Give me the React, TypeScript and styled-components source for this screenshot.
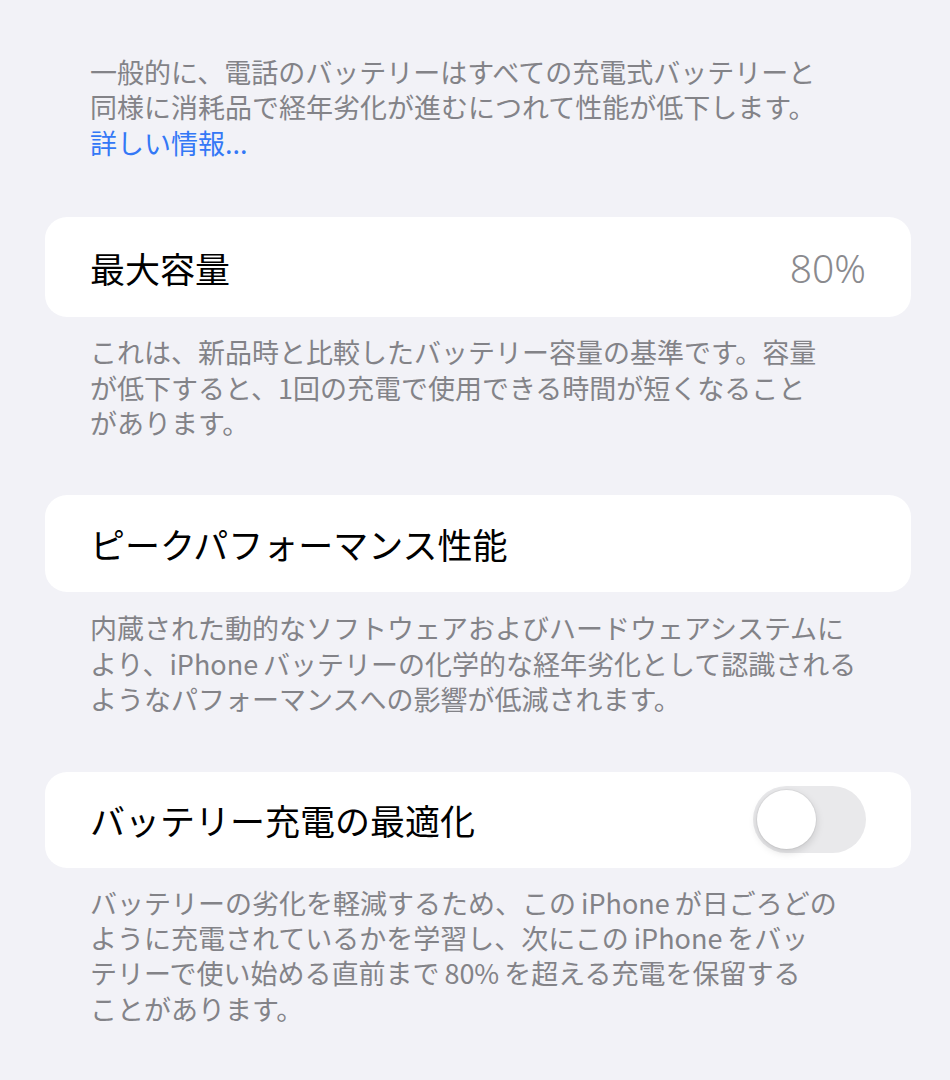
import * as React from "react";
import styled, { createGlobalStyle } from "styled-components";

const GlobalStyle = createGlobalStyle`
  html, body {
    margin: 0;
    padding: 0;
    background: #f2f2f7;
  }
  body {
    font-family: "Noto Sans CJK JP", "Noto Sans", sans-serif;
    -webkit-font-smoothing: antialiased;
  }
`;

const Page = styled.div`
  min-height: 1080px;
  box-sizing: border-box;
  padding: 54px 39px 0 45px;
  background: #f2f2f7;
`;

const Note = styled.p<{ $top?: number; $bottom?: number }>`
  margin: ${(p) => p.$top ?? 0}px 0 ${(p) => p.$bottom ?? 0}px;
  padding: 0 45px;
  font-size: 27px;
  line-height: 35.4px;
  color: #838388;
  white-space: nowrap;
`;

// iOS puts a little space between Latin words and Japanese text
const Latin = styled.span<{ $left?: number; $right?: number }>`
  margin: 0 ${(p) => p.$right ?? 5}px 0 ${(p) => p.$left ?? 5}px;
`;

const Link = styled.span`
  color: #3478f6;
`;

const Card = styled.div<{ $height: number }>`
  display: flex;
  align-items: center;
  justify-content: space-between;
  height: ${(p) => p.$height}px;
  padding: 0 45px;
  background: #ffffff;
  border-radius: 22px;
`;

const Title = styled.span`
  font-size: 35px;
  color: #000000;
  white-space: nowrap;
`;

const Value = styled.span`
  font-family: "Noto Sans", "Noto Sans CJK JP", sans-serif;
  font-size: 39px;
  font-weight: 300;
  color: #8a8a8e;
`;

const Toggle = styled.div`
  position: relative;
  width: 113px;
  height: 67px;
  border-radius: 34px;
  background: #e9e9eb;
`;

const Knob = styled.div`
  position: absolute;
  left: 4px;
  top: 4px;
  width: 59px;
  height: 59px;
  border-radius: 50%;
  background: #ffffff;
  box-shadow: 0 3px 8px rgba(0, 0, 0, 0.15), 0 0 0 1px rgba(0, 0, 0, 0.04);
`;

export default function App() {
  return (
    <>
      <GlobalStyle />
      <Page>
        <Note $bottom={57}>
          一般的に、電話のバッテリーはすべての充電式バッテリーと
          <br />
          同様に消耗品で経年劣化が進むにつれて性能が低下します。
          <br />
          <Link>詳しい情報...</Link>
        </Note>

        <Card $height={100}>
          <Title>最大容量</Title>
          <Value>80%</Value>
        </Card>
        <Note $top={17} $bottom={55}>
          これは、新品時と比較したバッテリー容量の基準です。容量
          <br />
          が低下すると、1回の充電で使用できる時間が短くなること
          <br />
          があります。
        </Note>

        <Card $height={97}>
          <Title>ピークパフォーマンス性能</Title>
        </Card>
        <Note $top={18} $bottom={55}>
          内蔵された動的なソフトウェアおよびハードウェアシステムに
          <br />
          より、<Latin $left={0}>iPhone</Latin>バッテリーの化学的な経年劣化として認識される
          <br />
          ようなパフォーマンスへの影響が低減されます。
        </Note>

        <Card $height={96}>
          <Title>バッテリー充電の最適化</Title>
          <Toggle>
            <Knob />
          </Toggle>
        </Card>
        <Note $top={17}>
          バッテリーの劣化を軽減するため、この<Latin>iPhone</Latin>が日ごろどの
          <br />
          ように充電されているかを学習し、次にこの<Latin>iPhone</Latin>をバッ
          <br />
          テリーで使い始める直前まで<Latin>80%</Latin>を超える充電を保留する
          <br />
          ことがあります。
        </Note>
      </Page>
    </>
  );
}
